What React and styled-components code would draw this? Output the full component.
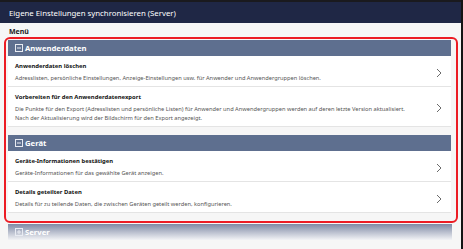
import React from "react";
import styled, { createGlobalStyle } from "styled-components";

const Global = createGlobalStyle`
  html, body { margin: 0; padding: 0; }
  body { width: 463px; height: 249px; overflow: hidden; background: #ffffff; font-family: "Noto Sans", "Open Sans", sans-serif; }
`;

const Page = styled.div`
  width: 461px;
  height: 249px;
  border-right: 2px solid #141414;
  background: #f6f6f6;
  display: flex;
  flex-direction: column;
  overflow: hidden;
`;

const TitleBar = styled.div`
  height: 21px;
  border-top: 2px solid #1a1a1e;
  background: #1f2745;
  color: #ffffff;
  font-size: 7.8px;
  display: flex;
  align-items: center;
  padding-left: 9px;
  flex-shrink: 0;
`;

const MenuLabel = styled.div`
  height: 14px;
  padding-left: 9px;
  font-size: 7px;
  font-weight: 700;
  color: #222;
  display: flex;
  align-items: flex-end;
  line-height: 11px;
`;

const Highlight = styled.div`
  margin: 0 3px 0 4px;
  border: 2px solid #ec1c24;
  border-radius: 6px;
  padding: 1px 2px 8px 2px;
`;

const Section = styled.div`
  display: flex;
  flex-direction: column;
  & + & { margin-top: 8px; }
`;

const SectionHeader = styled.div`
  height: 16px;
  background: ${p => p.$faded ? "linear-gradient(#7f8aa5, #f2f3f6)" : "#5e6f8f"};
  color: #fff;
  display: flex;
  align-items: center;
  padding-left: 7px;
  margin-right: 3px;
  font-size: 7.7px;
  font-weight: 700;
  gap: 2px;
`;

const BoxIcon = styled.svg`
  width: 8px;
  height: 8px;
  flex-shrink: 0;
`;

const Item = styled.div`
  background: #fff;
  border-bottom: 1px solid #e4e4e4;
  margin-right: 3px;
  display: flex;
  align-items: center;
  padding: 6px 9px 3px 7px;
`;

const ItemText = styled.div`
  flex: 1;
  display: flex;
  flex-direction: column;
  gap: 3px;
`;

const ItemTitle = styled.div`
  font-size: 5.9px;
  font-weight: 700;
  color: #111;
  line-height: 9px;
`;

const ItemDesc = styled.div`
  font-size: 5.7px;
  color: #555;
  line-height: 9px;
`;

const Chevron = styled.svg`
  width: 6px;
  height: 10px;
  flex-shrink: 0;
`;

const ServerWrap = styled.div`
  margin: 1px 6px 0 8px;
`;

const Minus = () => (
  <BoxIcon viewBox="0 0 8 8">
    <rect x="0.5" y="0.5" width="7" height="7" fill="none" stroke="#e8ebf2" strokeWidth="1" />
    <line x1="2" y1="4" x2="6" y2="4" stroke="#e8ebf2" strokeWidth="1" />
  </BoxIcon>
);

const Plus = () => (
  <BoxIcon viewBox="0 0 8 8">
    <rect x="0.5" y="0.5" width="7" height="7" fill="none" stroke="#e8ebf2" strokeWidth="1" />
    <line x1="2" y1="4" x2="6" y2="4" stroke="#e8ebf2" strokeWidth="1" />
    <line x1="4" y1="2" x2="4" y2="6" stroke="#e8ebf2" strokeWidth="1" />
  </BoxIcon>
);

const Arrow = () => (
  <Chevron viewBox="0 0 6 10">
    <polyline points="1,1 5,5 1,9" fill="none" stroke="#6a6a6a" strokeWidth="1" />
  </Chevron>
);

const Row = ({ title, lines }) => (
  <Item>
    <ItemText>
      <ItemTitle>{title}</ItemTitle>
      <ItemDesc>
        {lines.map((l, i) => <div key={i}>{l}</div>)}
      </ItemDesc>
    </ItemText>
    <Arrow />
  </Item>
);

export default function App() {
  return (
    <>
      <Global />
      <Page>
        <TitleBar>Eigene Einstellungen synchronisieren (Server)</TitleBar>
        <MenuLabel>Menü</MenuLabel>
        <Highlight>
          <Section>
            <SectionHeader><Minus />Anwenderdaten</SectionHeader>
            <Row
              title="Anwenderdaten löschen"
              lines={["Adresslisten, persönliche Einstellungen, Anzeige-Einstellungen usw. für Anwender und Anwendergruppen löschen."]}
            />
            <Row
              title="Vorbereiten für den Anwenderdatenexport"
              lines={[
                "Die Punkte für den Export (Adresslisten und persönliche Listen) für Anwender und Anwendergruppen werden auf deren letzte Version aktualisiert.",
                "Nach der Aktualisierung wird der Bildschirm für den Export angezeigt.",
              ]}
            />
          </Section>
          <Section>
            <SectionHeader><Minus />Gerät</SectionHeader>
            <Row
              title="Geräte-Informationen bestätigen"
              lines={["Geräte-Informationen für das gewählte Gerät anzeigen."]}
            />
            <Row
              title="Details geteilter Daten"
              lines={["Details für zu teilende Daten, die zwischen Geräten geteilt werden, konfigurieren."]}
            />
          </Section>
        </Highlight>
        <ServerWrap>
          <SectionHeader $faded><Plus />Server</SectionHeader>
        </ServerWrap>
      </Page>
    </>
  );
}
